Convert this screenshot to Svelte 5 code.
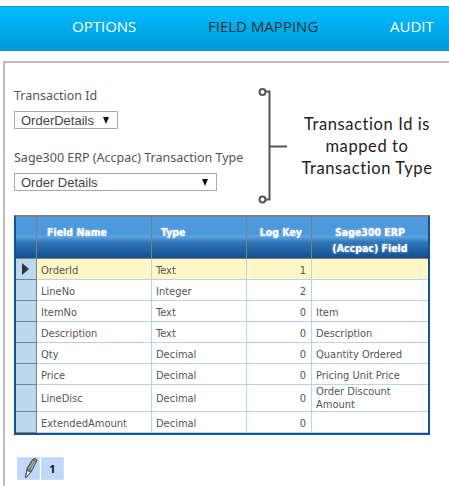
<script>
  const rows = [
    { name: 'OrderId', type: 'Text', key: 1, field: '', active: true },
    { name: 'LineNo', type: 'Integer', key: 2, field: '' },
    { name: 'ItemNo', type: 'Text', key: 0, field: 'Item' },
    { name: 'Description', type: 'Text', key: 0, field: 'Description' },
    { name: 'Qty', type: 'Decimal', key: 0, field: 'Quantity Ordered' },
    { name: 'Price', type: 'Decimal', key: 0, field: 'Pricing Unit Price' },
    { name: 'LineDisc', type: 'Decimal', key: 0, field: 'Order Discount Amount', tall: true },
    { name: 'ExtendedAmount', type: 'Decimal', key: 0, field: '' }
  ];
</script>

<div class="page">
  <nav class="tabs">
    <span class="tab t1">OPTIONS</span>
    <span class="tab t2 current">FIELD MAPPING</span>
    <span class="tab t3">AUDIT</span>
  </nav>

  <section class="panel">
    <div class="top">
      <div class="form">
        <label class="lbl" for="tid">Transaction Id</label>
        <div class="select s1" id="tid"><span>OrderDetails</span><i></i></div>
        <label class="lbl second" for="ttype">Sage300 ERP (Accpac) Transaction Type</label>
        <div class="select s2" id="ttype"><span>Order Details</span><i></i></div>
      </div>
      <svg class="bracket" width="34" height="120" viewBox="0 0 34 120" aria-hidden="true">
        <circle cx="4.500" cy="4" r="3" fill="none" stroke="#555" stroke-width="2"/>
        <circle cx="4.500" cy="111.500" r="3" fill="none" stroke="#555" stroke-width="2"/>
        <path d="M7 3.500H11.500V111.500H7M11.500 58.500H29" fill="none" stroke="#555" stroke-width="2"/>
      </svg>
      <p class="callout">Transaction Id is<br />mapped to<br />Transaction Type</p>
    </div>

    <table class="grid">
      <colgroup>
        <col class="c0" /><col class="c1" /><col class="c2" /><col class="c3" /><col class="c4" />
      </colgroup>
      <thead>
        <tr>
          <th class="rh"></th>
          <th class="l pad">Field Name</th>
          <th class="l">Type</th>
          <th class="r">Log Key</th>
          <th class="c">Sage300 ERP<br />(Accpac) Field</th>
        </tr>
      </thead>
      <tbody>
        {#each rows as row}
          <tr class:active={row.active} class:tall={row.tall}>
            <td class="rh">{#if row.active}<b class="arrow"></b>{/if}</td>
            <td>{row.name}</td>
            <td>{row.type}</td>
            <td class="num">{row.key}</td>
            <td class="fld">{row.field}</td>
          </tr>
        {/each}
      </tbody>
    </table>

    <div class="pager">
      <span class="pg">
        <svg class="pencil" width="16" height="21" viewBox="0 0 16 21" aria-hidden="true">
          <path d="M3.500 20L5 10.500L10.500 1.500C12 0 14.500 0.500 15 2.500L9 14Z" fill="#7d7d7d" stroke="#444" stroke-width="1"/>
          <path d="M3.500 20L4.800 12.500L8.800 14.300Z" fill="#f4f4f4" stroke="#444" stroke-width=".8"/>
          <path d="M7 10.500L11.500 3M9 12L13 4" stroke="#b5b5b5" stroke-width="1" fill="none"/>
        </svg>
      </span>
      <span class="pg num1">1</span>
    </div>
  </section>
</div>

<style>
  :global(body) {
    margin: 0;
    background: #fff;
  }
  .page {
    width: 449px;
    height: 486px;
    overflow: hidden;
    padding-top: 6px;
    box-sizing: border-box;
    font-family: "Noto Sans", "DejaVu Sans", sans-serif;
  }
  .tabs {
    height: 45px;
    box-sizing: border-box;
    border-top: 1px solid #0a9fdc;
    background: linear-gradient(#00bdff, #0099d8);
    display: flex;
    align-items: center;
    font-family: "Open Sans", sans-serif;
    font-size: 15px;
    color: #fff;
    padding-left: 72px;
    padding-bottom: 6px;
  }
  .tab { white-space: nowrap; }
  .t1 { width: 136px; }
  .t2 { width: 182px; }
  .current { color: #333; }
  .panel {
    margin: 10px 0 0 3px;
    border-top: 2px solid #bbb;
    border-left: 2px solid #bbb;
    padding-left: 9px;
    height: 430px;
  }
  .top {
    display: flex;
    height: 152px;
  }
  .form {
    width: 245px;
    flex: none;
    padding-top: 25px;
  }
  .lbl {
    display: block;
    font-size: 12.500px;
    line-height: 16px;
    color: #555;
    white-space: nowrap;
  }
  .second { margin-top: 21px; }
  .select {
    margin-top: 7px;
    height: 18px;
    box-sizing: border-box;
    border: 1px solid #aaa;
    display: flex;
    align-items: center;
    justify-content: space-between;
    font-family: "Liberation Sans", sans-serif;
    font-size: 13px;
    color: #444;
    padding: 0 8px 0 6px;
    background: #fff;
  }
  .s1 { width: 104px; }
  .s2 { width: 203px; }
  .select i {
    width: 0;
    height: 0;
    border-left: 3.500px solid transparent;
    border-right: 3.500px solid transparent;
    border-top: 7px solid #111;
  }
  .bracket {
    flex: none;
    margin: 25px 0 0 -1px;
  }
  .callout {
    margin: 50px 0 0 0;
    width: 150px;
    flex: none;
    text-align: center;
    font-family: Lato, sans-serif;
    font-size: 16.500px;
    letter-spacing: .6px;
    line-height: 22px;
    color: #222;
    white-space: nowrap;
  }
  .grid {
    border-collapse: separate;
    border-spacing: 0;
    table-layout: fixed;
    width: 416px;
    border-left: 2px solid #125290;
    border-right: 2px solid #125290;
    border-bottom: 2px solid #125290;
    border-top: 2px solid #808080;
    font-family: "DejaVu Sans Condensed", "DejaVu Sans", sans-serif;
    font-stretch: condensed;
    font-size: 11px;
    color: #555;
  }
  .c0 { width: 21px; }
  .c1 { width: 115px; }
  .c2 { width: 95px; }
  .c3 { width: 65px; }
  th {
    height: 42px;
    box-sizing: border-box;
    padding: 7px 4px 0;
    vertical-align: top;
    color: #fff;
    font-size: 10.500px;
    line-height: 16px;
    font-weight: 700;
    background: linear-gradient(#4f9bdf 0, #4a97dc 42%, #5ea3e0 48%, #2f76b8 62%, #124f90 100%);
    border-right: 1px solid #808080;
    border-bottom: 1px solid #808080;
    text-shadow: 0 0 2px #cfe6ff;
  }
  th:last-child { border-right: 0; }
  .l { text-align: left; }
  .pad { padding-left: 10px; }
  th.l:not(.pad) { padding-left: 9px; }
  .r { text-align: right; padding-right: 9px; }
  .c { text-align: center; }
  td {
    height: 21px;
    box-sizing: border-box;
    padding: 2px 4px 0;
    border-right: 1px solid #b3d6ee;
    border-bottom: 1px solid #b3d6ee;
    line-height: 13px;
    background: #fff;
  }
  td:last-child { border-right: 0; }
  td.rh {
    background: #bcd8ee;
    border-right: 1px solid #808080;
    border-bottom: 1px solid #808080;
    padding: 0;
  }
  .tall td { height: 27px; padding-top: 0; }
  .active td:not(.rh) { background: #fff7c6; }
  .num { text-align: right; padding-right: 5px; }
  .arrow {
    display: block;
    width: 0;
    height: 0;
    margin-left: 6px;
    border-top: 6px solid transparent;
    border-bottom: 6px solid transparent;
    border-left: 7px solid #333;
  }
  .pager {
    display: flex;
    gap: 1px;
    margin-top: 22px;
    margin-left: 3px;
  }
  .pg {
    width: 23px;
    height: 23px;
    background: #bfd9fb;
    display: flex;
    align-items: center;
    justify-content: center;
    border: 1px solid #cfdff0;
    box-sizing: border-box;
  }
  .pencil { margin-left: 2px; }
  .num1 {
    font-size: 11px;
    font-weight: 700;
    color: #111;
  }
</style>
